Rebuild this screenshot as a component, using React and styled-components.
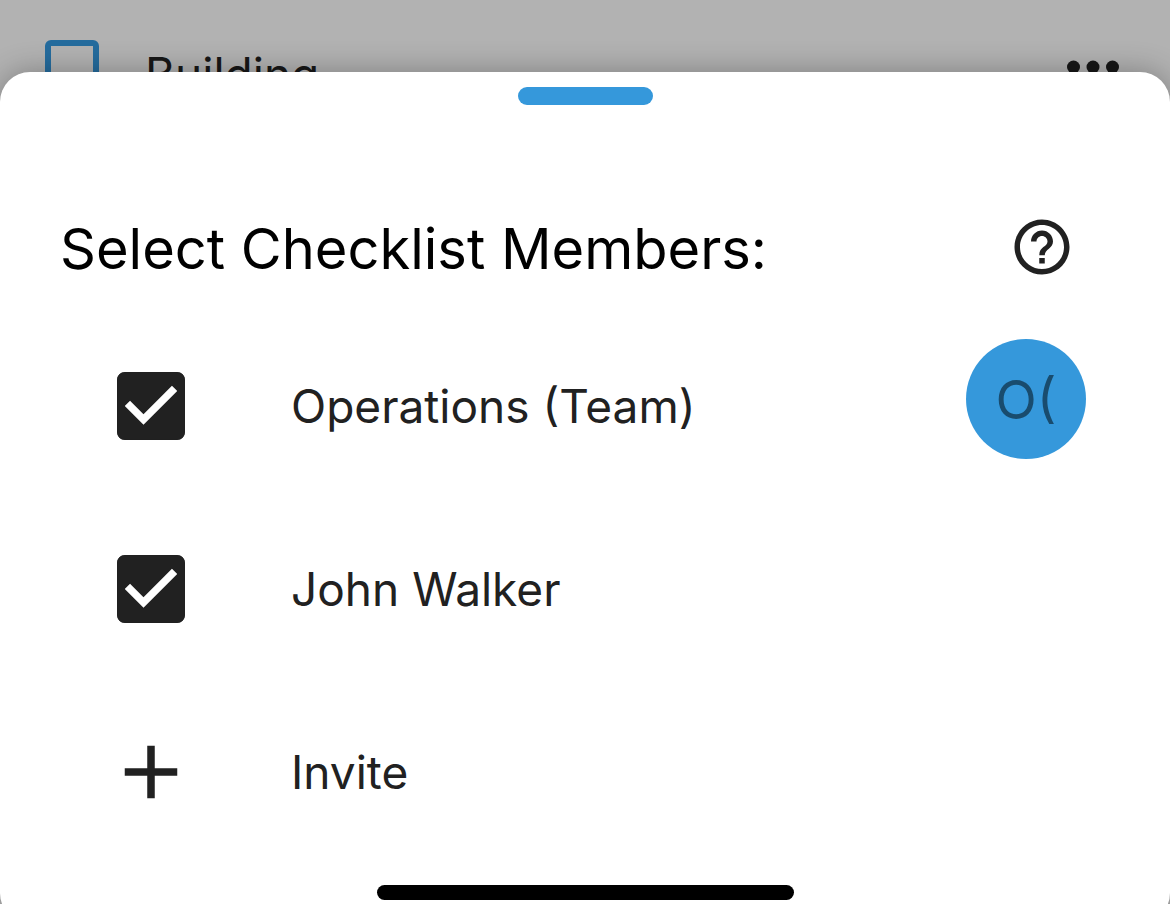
import React from "react";
import styled, { createGlobalStyle } from "styled-components";

const GlobalStyle = createGlobalStyle`
  * { box-sizing: border-box; }
  body {
    margin: 0;
    background: #b2b2b2;
    color: #212121;
    font-family: Inter, "Liberation Sans", sans-serif;
  }
`;

const Screen = styled.div`
  position: relative;
  height: 100vh;
  overflow: hidden;
`;

const ListRow = styled.div`
  display: flex;
  align-items: flex-start;
  gap: 46px;
  padding: 28px 38px 0 45px;
`;

const ListLabel = styled.label`
  flex: 1;
  padding-top: 16px;
  color: #171717;
  font-size: 46px;
  line-height: 60px;
`;

const OutlineCheckbox = styled.input`
  appearance: none;
  width: 54px;
  height: 54px;
  margin: 12px 0 0;
  border: 6px solid #256c9e;
  border-radius: 6px;
`;

const IconButton = styled.button`
  display: flex;
  padding: 0;
  border: 0;
  background: none;
  color: ${(p) => p.$color || "#212121"};
  cursor: pointer;
`;

const Icon = styled.svg`
  display: block;
  width: ${(p) => p.$size}px;
  height: ${(p) => p.$size}px;
  fill: currentColor;
`;

const Sheet = styled.section`
  position: absolute;
  top: 72px;
  left: 0;
  right: 0;
  display: flex;
  flex-direction: column;
  min-height: calc(100vh - 53px);
  padding: 15px 0 23px;
  border-radius: 30px;
  background: #fff;
  box-shadow: 0 0 30px rgba(0, 0, 0, 0.3);
`;

const Handle = styled.div`
  align-self: center;
  width: 135px;
  height: 18px;
  border-radius: 9px;
  background: #3598db;
`;

const SheetHeader = styled.header`
  display: flex;
  align-items: flex-end;
  justify-content: space-between;
  margin: 109px 95px 34px 60px;
`;

const Title = styled.h1`
  margin: 0;
  color: #000;
  font-size: 56px;
  font-weight: 400;
  line-height: 62px;
`;

const Members = styled.div`
  display: flex;
  flex-direction: column;
`;

const Member = styled.label`
  display: flex;
  align-items: center;
  height: 183px;
  padding: 0 84px 0 106px;
  font-size: 46px;
  line-height: 60px;
  cursor: pointer;
`;

const InviteButton = styled.button`
  display: flex;
  align-items: center;
  height: 183px;
  padding: 0 84px 0 106px;
  border: 0;
  background: none;
  color: inherit;
  font: inherit;
  font-size: 46px;
  line-height: 60px;
  text-align: left;
  cursor: pointer;
`;

const Name = styled.span`
  flex: 1;
  margin-left: 95px;
`;

const TickBox = styled.span`
  display: grid;

  > * { grid-area: 1 / 1; }
  svg { pointer-events: none; visibility: hidden; }
  input:checked + svg { visibility: visible; }
`;

const TickInput = styled.input`
  appearance: none;
  width: 68px;
  height: 68px;
  margin: 11px;
  border: 8px solid #212121;
  border-radius: 8px;
`;

const Avatar = styled.span`
  display: flex;
  align-items: center;
  justify-content: center;
  align-self: flex-start;
  width: 120px;
  height: 120px;
  margin-top: 25px;
  padding-top: 2px;
  border-radius: 50%;
  background: #3598db;
  color: #194c6e;
  font-size: 54px;
`;

const HomeIndicator = styled.div`
  align-self: center;
  width: 417px;
  height: 15px;
  margin-top: 22px;
  border-radius: 8px;
  background: #000;
`;

function MemberOption({ name, initials }) {
  return (
    <Member>
      <TickBox>
        <TickInput type="checkbox" defaultChecked />
        <Icon $size={90} viewBox="0 0 24 24" aria-hidden="true">
          <path d="M19 3H5c-1.11 0-2 .9-2 2v14c0 1.1.89 2 2 2h14c1.11 0 2-.9 2-2V5c0-1.1-.89-2-2-2zm-9 14l-5-5 1.41-1.41L10 14.17l7.59-7.59L19 8l-9 9z" />
        </Icon>
      </TickBox>
      <Name>{name}</Name>
      {initials && <Avatar aria-hidden="true">{initials}</Avatar>}
    </Member>
  );
}

export default function App() {
  return (
    <Screen>
      <GlobalStyle />
      <ListRow>
        <OutlineCheckbox type="checkbox" id="building" />
        <ListLabel htmlFor="building">Building</ListLabel>
        <IconButton type="button" aria-label="More options" $color="#171717">
          <Icon $size={78} viewBox="0 0 24 24" aria-hidden="true">
            <circle cx="6" cy="12" r="2" />
            <circle cx="12" cy="12" r="2" />
            <circle cx="18" cy="12" r="2" />
          </Icon>
        </IconButton>
      </ListRow>
      <Sheet>
        <Handle />
        <SheetHeader>
          <Title>Select Checklist Members:</Title>
          <IconButton type="button" aria-label="Help">
            <Icon $size={66} viewBox="0 0 24 24" aria-hidden="true">
              <path d="M11 18h2v-2h-2v2zm1-16C6.48 2 2 6.48 2 12s4.48 10 10 10 10-4.48 10-10S17.52 2 12 2zm0 18c-4.41 0-8-3.59-8-8s3.59-8 8-8 8 3.59 8 8-3.59 8-8 8zm0-14c-2.21 0-4 1.79-4 4h2c0-1.1.9-2 2-2s2 .9 2 2c0 2-3 1.75-3 5h2c0-2.25 3-2.5 3-5 0-2.21-1.79-4-4-4z" />
            </Icon>
          </IconButton>
        </SheetHeader>
        <Members>
          <MemberOption name="Operations (Team)" initials="O(" />
          <MemberOption name="John Walker" />
          <InviteButton type="button">
            <Icon $size={90} viewBox="0 0 24 24" aria-hidden="true">
              <path d="M19 13h-6v6h-2v-6H5v-2h6V5h2v6h6v2z" />
            </Icon>
            <Name>Invite</Name>
          </InviteButton>
        </Members>
        <HomeIndicator />
      </Sheet>
    </Screen>
  );
}
